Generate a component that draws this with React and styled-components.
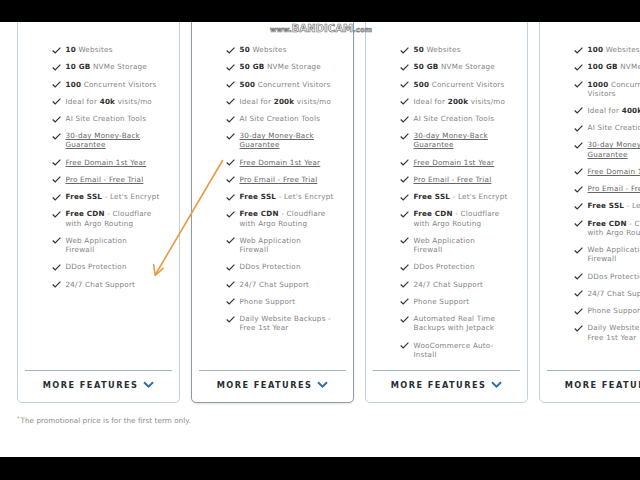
import React from "react";
import styled, { createGlobalStyle } from "styled-components";

const GlobalStyle = createGlobalStyle`
  html, body { margin: 0; padding: 0; background: #000; }
  * { box-sizing: border-box; }
`;

const Screen = styled.div`
  position: relative;
  width: 640px;
  height: 480px;
  display: flex;
  flex-direction: column;
  overflow: hidden;
  font-family: "DejaVu Sans", "Open Sans", sans-serif;
`;

const Bar = styled.div`
  height: ${(p) => p.$h}px;
  background: #000;
  flex: none;
`;

const Viewport = styled.div`
  flex: 1;
  background: #fff;
  overflow: hidden;
  display: flex;
  flex-direction: column;
`;

const CardsRow = styled.div`
  display: flex;
  gap: 11px;
  padding-left: 17px;
  margin-top: -10px;
`;

const Card = styled.div`
  flex: none;
  width: 163px;
  height: 391px;
  border: 1px solid ${(p) => (p.$active ? "#8e9cab" : "#c3d1dc")};
  border-radius: 5px;
  display: flex;
  flex-direction: column;
  background: #fff;
  overflow: hidden;
  box-shadow: ${(p) => (p.$active ? "0 1px 2px rgba(0,0,0,0.12)" : "none")};
`;

const List = styled.ul`
  flex: 1;
  min-height: 0;
  list-style: none;
  margin: 0;
  padding: 32px 0 0 34px;
  display: flex;
  flex-direction: column;
  gap: 8.05px;
`;

const Item = styled.li`
  display: flex;
  align-items: flex-start;
  gap: 4.5px;
  font-size: 7.2px;
  line-height: 9.2px;
  color: #838383;
  letter-spacing: 0.22px;
`;

const Text = styled.span`
  display: flex;
  flex-direction: column;
  white-space: nowrap;
`;

const Line = styled.span`
  display: block;
`;

const Bold = styled.b`
  font-weight: 700;
  color: #2e2e2e;
`;

const Link = styled.span`
  color: #666;
  text-decoration: underline;
  text-underline-offset: 1px;
`;

const CheckSvg = styled.svg`
  flex: none;
  margin-top: 1.5px;
`;

const Footer = styled.div`
  flex: none;
  margin: 0 7px;
  border-top: 1.5px solid #a7b3bd;
  height: 32px;
  padding-bottom: 4px;
  display: flex;
  align-items: center;
  justify-content: center;
  gap: 5px;
  font-size: 8.2px;
  font-weight: 700;
  letter-spacing: 1.45px;
  color: #2a2e35;
  white-space: nowrap;
`;

const Footnote = styled.p`
  margin: 12px 0 0 17px;
  font-size: 7.2px;
  color: #8a8a8a;
  letter-spacing: 0.05px;
`;

const Sup = styled.sup`
  font-size: 5px;
  margin-right: 1px;
`;

const Watermark = styled.div`
  position: absolute;
  left: 270px;
  top: 23px;
  display: flex;
  align-items: baseline;
  font-family: "DejaVu Sans", sans-serif;
  font-weight: 700;
  color: #f4f4f4;
  -webkit-text-stroke: 0.6px #6a6a6a;
  letter-spacing: 0.05px;
`;

const WmSmall = styled.span`
  font-size: 7px;
`;

const WmBig = styled.span`
  font-size: 10px;
`;

const Overlay = styled.svg`
  position: absolute;
  left: 0;
  top: 0;
  pointer-events: none;
`;

const Check = () => (
  <CheckSvg width="9" height="7" viewBox="0 0 9 7">
    <path d="M0.7 3.5 L3.2 6 L8.4 0.7" fill="none" stroke="#333" strokeWidth="1.2" />
  </CheckSvg>
);

const Chevron = () => (
  <svg width="11" height="7" viewBox="0 0 11 7">
    <path d="M1 1.2 L5.5 5.6 L10 1.2" fill="none" stroke="#2f6db0" strokeWidth="2" />
  </svg>
);

const B = (t) => ({ k: "b", t });
const L = (t) => ({ k: "l", t });

/* each item: list of lines; each line: list of segments */
const common = [
  [["AI Site Creation Tools"]],
  [[L("30-day Money-Back")], [L("Guarantee")]],
  [[L("Free Domain 1st Year")]],
  [[L("Pro Email - Free Trial")]],
  [[B("Free SSL"), " - Let's Encrypt"]],
  [[B("Free CDN"), " - Cloudflare"], ["with Argo Routing"]],
  [["Web Application"], ["Firewall"]],
  [["DDos Protection"]],
  [["24/7 Chat Support"]],
];

const plan = (n, gb, visitors, k) => [
  [[B(n), " Websites"]],
  [[B(gb), " NVMe Storage"]],
  visitors,
  [["Ideal for ", B(k), " visits/mo"]],
  ...common,
];

const cards = [
  { items: plan("10", "10 GB", [[B("100"), " Concurrent Visitors"]], "40k") },
  {
    active: true,
    items: [
      ...plan("50", "50 GB", [[B("500"), " Concurrent Visitors"]], "200k"),
      [["Phone Support"]],
      [["Daily Website Backups -"], ["Free 1st Year"]],
    ],
  },
  {
    items: [
      ...plan("50", "50 GB", [[B("500"), " Concurrent Visitors"]], "200k"),
      [["Phone Support"]],
      [["Automated Real Time"], ["Backups with Jetpack"]],
      [["WooCommerce Auto-"], ["Install"]],
    ],
  },
  {
    items: [
      ...plan("100", "100 GB", [[B("1000"), " Concurrent"], ["Visitors"]], "400k"),
      [["Phone Support"]],
      [["Daily Website Backups -"], ["Free 1st Year"]],
    ],
  },
];

const Segment = ({ s }) => {
  if (typeof s === "string") return s;
  if (s.k === "b") return <Bold>{s.t}</Bold>;
  return <Link>{s.t}</Link>;
};

export default function App() {
  return (
    <>
      <GlobalStyle />
      <Screen>
        <Bar $h={22} />
        <Viewport>
          <CardsRow>
            {cards.map((c, i) => (
              <Card key={i} $active={c.active}>
                <List>
                  {c.items.map((lines, j) => (
                    <Item key={j}>
                      <Check />
                      <Text>
                        {lines.map((segs, li) => (
                          <Line key={li}>
                            {segs.map((s, m) => (
                              <Segment key={m} s={s} />
                            ))}
                          </Line>
                        ))}
                      </Text>
                    </Item>
                  ))}
                </List>
                <Footer>
                  MORE FEATURES <Chevron />
                </Footer>
              </Card>
            ))}
          </CardsRow>
          <Footnote>
            <Sup>*</Sup>The promotional price is for the first term only.
          </Footnote>
        </Viewport>
        <Bar $h={23} />
        <Watermark>
          <WmSmall>www.</WmSmall>
          <WmBig>BANDICAM</WmBig>
          <WmSmall>.com</WmSmall>
        </Watermark>
        <Overlay width="640" height="480" viewBox="0 0 640 480">
          <line x1="222.5" y1="160.5" x2="155.5" y2="274.5" stroke="#ea9a45" strokeWidth="1.6" strokeLinecap="round" />
          <path d="M153.6 264.5 L155.3 275.5 L163.2 268.2" fill="none" stroke="#ea9a45" strokeWidth="1.6" strokeLinecap="round" strokeLinejoin="round" />
        </Overlay>
      </Screen>
    </>
  );
}
